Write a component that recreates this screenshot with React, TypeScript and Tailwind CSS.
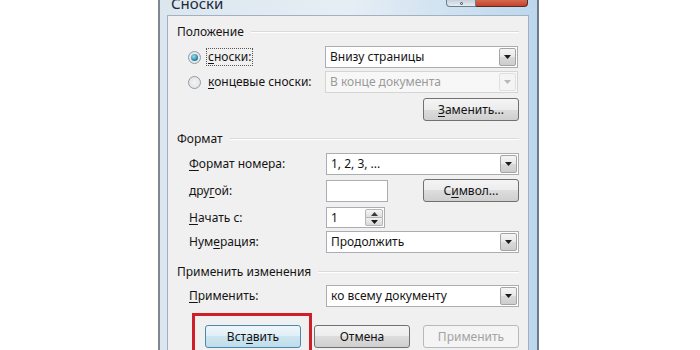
import React from 'react';

const font = { fontFamily: '"Noto Sans", "DejaVu Sans", sans-serif' };

function Arrow({ disabled }: { disabled?: boolean }) {
  return (
    <svg width="7" height="4" viewBox="0 0 7 4">
      <path d="M0 0h7L3.5 4z" fill={disabled ? '#b8b8b8' : '#1a1a1a'} />
    </svg>
  );
}

function Combo({ value, disabled }: { value: string; disabled?: boolean }) {
  return (
    <div
      className={
        'flex h-[22px] w-[193px] items-center border pl-[4px] ' +
        (disabled ? 'border-[#d5d5d5] bg-[#f7f7f7] text-[#9a9a9a]' : 'border-[#abadb3] bg-white text-[#141414]')
      }
    >
      <span className="leading-none">{value}</span>
      <div
        className={
          'ml-auto mr-[1px] flex h-[18px] w-[17px] items-center justify-center rounded-[2px] border ' +
          (disabled
            ? 'border-[#e0e0e0] bg-[#f4f4f4]'
            : 'border-[#a4a4a4] bg-[linear-gradient(#f5f5f5_0%,#e8e8e8_50%,#d9d9d9_50%,#cdcdcd_100%)]')
        }
      >
        <Arrow disabled={disabled} />
      </div>
    </div>
  );
}

function Btn({
  children,
  disabled,
  primary,
}: {
  children: React.ReactNode;
  disabled?: boolean;
  primary?: boolean;
}) {
  let cls = 'border-[#707070] bg-[linear-gradient(#f4f4f4_0%,#ececec_50%,#dddddd_50%,#cfcfcf_100%)] text-[#141414]';
  if (primary) cls = 'border-[#4a88ae] bg-[linear-gradient(#eef6fb_0%,#e0eef6_50%,#cde5f0_50%,#c0dcea_100%)] text-[#141414]';
  if (disabled) cls = 'border-[#b7babc] bg-[#f4f4f4] text-[#a3a3a3]';
  return (
    <div className={'flex h-[23px] w-[96px] items-center justify-center rounded-[3px] border ' + cls}>
      <span className="leading-none">{children}</span>
    </div>
  );
}

function GroupHeader({ title }: { title: string }) {
  return (
    <div className="flex h-[16px] items-center pl-[9px] pr-[9px]">
      <span className="leading-none text-[#141414]">{title}</span>
      <div className="ml-[7px] flex-1 border-t border-b border-t-[#dadada] border-b-white" />
    </div>
  );
}

function Row({ label, children, className }: { label: React.ReactNode; children: React.ReactNode; className?: string }) {
  return (
    <div className={'flex items-center pl-[21px] ' + (className ?? '')}>
      <div className="w-[137px] leading-none text-[#141414]">{label}</div>
      {children}
    </div>
  );
}

function Radio({ checked }: { checked?: boolean }) {
  return (
    <div className="flex h-[13px] w-[13px] items-center justify-center rounded-full border border-[#8e9aa6] bg-[radial-gradient(circle,#f4f4f4,#dcdfe3)]">
      {checked && <div className="h-[7px] w-[7px] rounded-full bg-[radial-gradient(circle_at_40%_35%,#9fe0f0,#1c7a99_70%,#0f5d78)]" />}
    </div>
  );
}

export default function App() {
  return (
    <div className="flex h-[350px] w-[700px] overflow-hidden bg-white text-[12px]" style={font}>
      <div className="ml-[158px] flex h-[350px] w-[381px] flex-col border-x-2 border-l-[#7d8892] border-r-[#6f7b86] bg-[linear-gradient(90deg,#dbe6ef,#e6eef5_50%,#bcd7ed)] pl-[7px] pr-[8px]">
        <div className="flex h-[15px] items-start">
          <span className="-mt-[7px] ml-[4px] text-[15px] leading-[20px] text-[#1c2a3a]">Сноски</span>
          <div className="ml-auto mr-[1px] flex">
            <div className="flex h-[7px] w-[30px] items-end justify-center rounded-bl-[4px] border border-t-0 border-[#6f7b88] bg-[linear-gradient(#c5d0db,#e8edf2)]">
              <div className="mb-[1px] h-[3px] w-[3px] rounded-full border border-[#3a4a5a]" />
            </div>
            <div className="h-[7px] w-[52px] rounded-br-[4px] border border-t-0 border-l-0 border-[#5a2a22] bg-[linear-gradient(#d4694e,#c2432c)]" />
          </div>
        </div>
        <div className="flex flex-1 flex-col border border-b-0 border-[#a1b1c1] bg-[#f0f0f0]">
          <div className="mt-[8px]">
            <GroupHeader title="Положение" />
          </div>
          <div className="mt-[6px] flex items-center pl-[20px]">
            <div className="flex w-[137px] items-center">
              <Radio checked />
              <span className="ml-[5px] border border-dotted border-[#555] px-[1px] py-[2px] leading-none text-[#141414]">
                <u className="underline-offset-2">с</u>носки:
              </span>
            </div>
            <Combo value="Внизу страницы" />
          </div>
          <div className="mt-[3px] flex items-center pl-[20px]">
            <div className="flex w-[137px] items-center">
              <Radio />
              <span className="ml-[7px] leading-none text-[#141414]">
                <u className="underline-offset-2">к</u>онцевые сноски:
              </span>
            </div>
            <Combo value="В конце документа" disabled />
          </div>
          <div className="mt-[5px] flex justify-end pr-[9px]">
            <Btn>
              <u className="underline-offset-2">З</u>аменить...
            </Btn>
          </div>
          <div className="mt-[10px]">
            <GroupHeader title="Формат" />
          </div>
          <Row
            className="mt-[6px]"
            label={
              <>
                <u className="underline-offset-2">Ф</u>ормат номера:
              </>
            }
          >
            <Combo value="1, 2, 3, ..." />
          </Row>
          <Row
            className="mt-[4px]"
            label={
              <>
                дру<u className="underline-offset-2">г</u>ой:
              </>
            }
          >
            <div className="h-[22px] w-[62px] border border-[#abadb3] bg-white" />
            <div className="ml-auto pr-[9px]">
              <Btn>
                С<u className="underline-offset-2">и</u>мвол...
              </Btn>
            </div>
          </Row>
          <Row
            className="mt-[5px]"
            label={
              <>
                <u className="underline-offset-2">Н</u>ачать с:
              </>
            }
          >
            <div className="flex h-[21px] w-[59px] items-center border border-[#abadb3] bg-white pl-[4px]">
              <span className="leading-none text-[#141414]">1</span>
              <div className="ml-auto mr-[1px] flex h-[17px] w-[18px] flex-col">
                <div className="flex flex-1 items-center justify-center rounded-t-[2px] border border-[#b5b5b5] bg-[linear-gradient(#f6f6f6,#dedede)]">
                  <svg width="7" height="4" viewBox="0 0 7 4">
                    <path d="M0 4h7L3.5 0z" fill="#3a3a3a" />
                  </svg>
                </div>
                <div className="flex flex-1 items-center justify-center rounded-b-[2px] border border-t-0 border-[#b5b5b5] bg-[linear-gradient(#f0f0f0,#d8d8d8)]">
                  <Arrow />
                </div>
              </div>
            </div>
          </Row>
          <Row
            className="mt-[3px]"
            label={
              <>
                Нум<u className="underline-offset-2">е</u>рация:
              </>
            }
          >
            <Combo value="Продолжить" />
          </Row>
          <div className="mt-[11px]">
            <GroupHeader title="Применить изменения" />
          </div>
          <Row
            className="mt-[5px]"
            label={
              <>
                <u className="underline-offset-2">П</u>рименить:
              </>
            }
          >
            <Combo value="ко всему документу" />
          </Row>
          <div className="mt-[18px] flex justify-end gap-[13px] pr-[9px]">
            <div className="relative">
              <div className="absolute -left-[13px] -top-[12px] h-[60px] w-[120px] border-[3px] border-[#cf1f2b]" />
              <Btn primary>
                Вст<u className="underline-offset-2">а</u>вить
              </Btn>
            </div>
            <Btn>Отмена</Btn>
            <Btn disabled>Применить</Btn>
          </div>
        </div>
      </div>
    </div>
  );
}
